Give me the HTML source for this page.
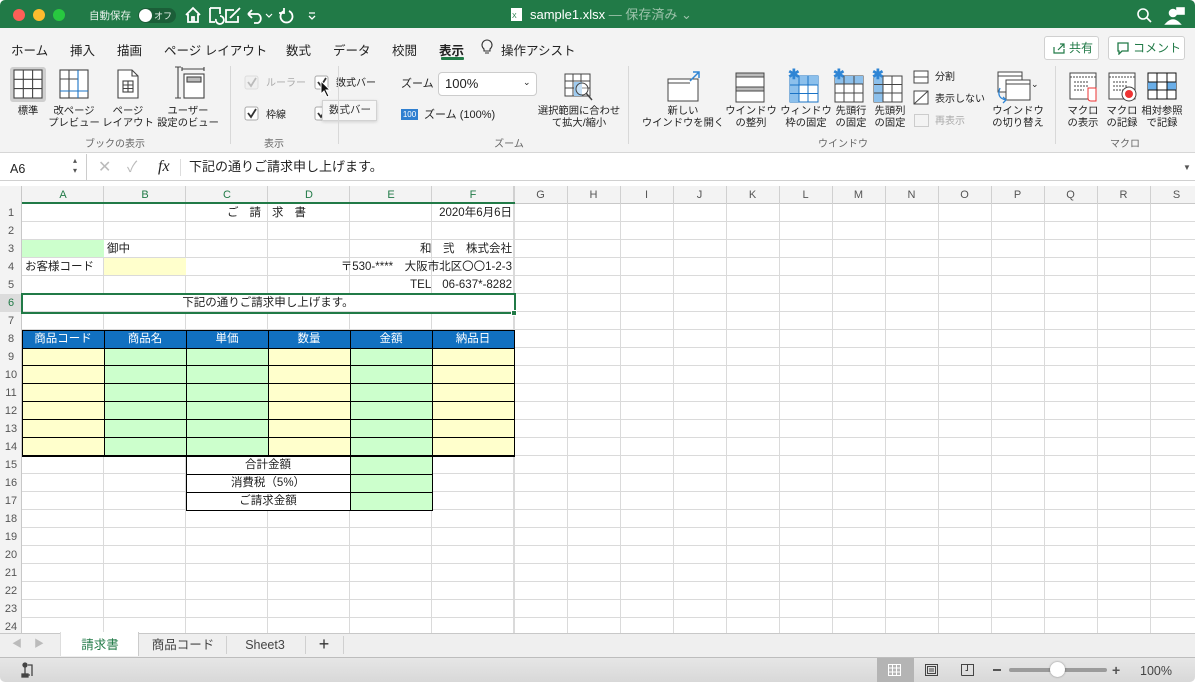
<!DOCTYPE html>
<html><head><meta charset="utf-8">
<style>
*{margin:0;padding:0;box-sizing:border-box}
body{width:1195px;height:682px;overflow:hidden;position:relative;background:#fff;font-family:"Liberation Sans","Noto Sans CJK JP",sans-serif;color:#222}
.a{position:absolute}
.t{position:absolute;white-space:nowrap;font-size:11px;line-height:12px;text-align:center}
.c{position:absolute;white-space:nowrap;font-size:10.3px;line-height:12px;text-align:center;transform:translateX(-50%)}
.title{left:0;top:0;width:1195px;height:28px;background:#217a47;border-radius:5px 5px 0 0}
.dot{position:absolute;top:9px;width:12px;height:12px;border-radius:50%}
.tabs span{position:absolute;top:40px;font-size:12.5px;color:#222}
.cell{position:absolute;height:18px;line-height:18px;font-size:11.5px;white-space:nowrap}
.rh{position:absolute;left:0;width:22px;text-align:center;font-size:11px;color:#555;height:18px;line-height:19px}
.ch{position:absolute;top:186px;height:18px;line-height:18px;text-align:center;font-size:11px;color:#555}
</style></head><body>
<div class="a title"></div>
<div class="dot" style="left:13px;background:#fe5f57"></div>
<div class="dot" style="left:33px;background:#febc2e"></div>
<div class="dot" style="left:53px;background:#28c840"></div>
<div class="t" style="left:89px;top:10px;color:#e8f1eb;font-size:10.5px">自動保存</div>
<div class="a" style="left:138px;top:8px;width:38px;height:15px;border-radius:8px;background:#1b5e38"></div>
<div class="a" style="left:139px;top:9px;width:13px;height:13px;border-radius:50%;background:#fff"></div>
<div class="t" style="left:154px;top:10px;color:#e8f1eb;font-size:9px">オフ</div>
<svg class="a" style="left:184px;top:5px" width="160" height="20" viewBox="0 0 160 20" fill="none" stroke="#fff" stroke-width="1.8">
<path d="M2 10 L9 3 L16 10 M4 9 V17 H14 V9 M8 17 V12 H10 V17"/>
<path d="M26 3 H36 V9 M26 3 V17 H31 M32 14 a4 4 0 1 0 4 -3"/>
<path d="M50 5 H42 V17 H54 V11 M46 13 L56 3"/>
<path d="M64 9 H74 a5 5 0 0 1 0 9 H70 M64 9 L68 5 M64 9 L68 13"/>
<path d="M82 9 l3 3 3 -3" stroke-width="1.2"/>
<path d="M100 6 a6 6 0 1 0 5 0 M100 3 V8 H95"/>
<path d="M125 8 H131 M125 11 l3 3 3 -3" stroke-width="1.3"/>
</svg>
<svg class="a" style="left:510px;top:7px" width="14" height="15"><rect x="1" y="1" width="11" height="13" fill="#fff"/><text x="2" y="11" font-size="7" fill="#217a47" font-family="Liberation Sans">X</text></svg>
<div class="t" style="left:530px;top:8px;font-size:13px;line-height:14px;color:#fff;text-align:left">sample1.xlsx <span style="color:#9dc3ab">— 保存済み ⌄</span></div>
<svg class="a" style="left:1136px;top:7px" width="50" height="18" fill="none" stroke="#fff" stroke-width="1.6"><circle cx="7" cy="7" r="5"/><path d="M11 11 L15 15"/><circle cx="37" cy="6" r="3.5" fill="#fff"/><path d="M30 17 q7 -8 14 0 Z" fill="#fff"/><rect x="41" y="1" width="7" height="6" fill="#fff"/></svg>

<div class="a" style="left:0;top:28px;width:1195px;height:125px;background:#f3f3f3;border-bottom:1px solid #d6d6d6"></div>
<div class="tabs">
<span style="left:11px">ホーム</span><span style="left:70px">挿入</span><span style="left:117px">描画</span><span style="left:164px">ページ レイアウト</span><span style="left:286px">数式</span><span style="left:333px">データ</span><span style="left:392px">校閲</span><span style="left:439px;font-weight:bold">表示</span><span style="left:501px">操作アシスト</span>
</div>
<div class="a" style="left:441px;top:57px;width:23px;height:3px;background:#217a47;border-radius:1px"></div>
<svg class="a" style="left:480px;top:38px" width="14" height="18" fill="none" stroke="#333" stroke-width="1.1"><path d="M4 11 a5 5 0 1 1 6 0 V13 H4 Z M5 15 H9"/></svg>
<div class="a" style="left:1044px;top:36px;width:55px;height:24px;background:#fff;border:1px solid #d0d0d0;border-radius:3px"></div>
<div class="t" style="left:1069px;top:42px;font-size:12px;color:#217a47">共有</div>
<svg class="a" style="left:1052px;top:41px" width="14" height="14" fill="none" stroke="#217a47" stroke-width="1.2"><path d="M2 6 V12 H12 V8 M6 9 L12 3 M8 3 H12 V7"/></svg>
<div class="a" style="left:1108px;top:36px;width:77px;height:24px;background:#fff;border:1px solid #d0d0d0;border-radius:3px"></div>
<svg class="a" style="left:1116px;top:41px" width="14" height="14" fill="none" stroke="#217a47" stroke-width="1.3"><path d="M2 2 H12 V10 H6 L3 13 V10 H2 Z"/></svg>
<div class="t" style="left:1133px;top:42px;font-size:12px;color:#217a47">コメント</div>

<div class="a" style="left:10px;top:67px;width:36px;height:35px;background:#cfcfcf;border-radius:3px"></div>
<svg class="a" style="left:0;top:64px" width="230" height="40" fill="none" stroke="#444" stroke-width="1.1">
<rect x="14" y="6" width="28" height="28" fill="#fff"/><path d="M23.3 6 V34 M32.6 6 V34 M14 15.3 H42 M14 24.6 H42"/>
<rect x="60" y="6" width="28" height="28" fill="#fff"/><path d="M69 6 V34 M60 15 H78" /><path d="M78 6 V34 M60 27 H88" stroke="#1a73c6"/>
<path d="M118 6 H132 L138 12 V34 H118 Z" fill="#fff"/><path d="M132 6 V12 H138"/><rect x="123" y="17" width="10" height="11"/><path d="M123 21 H133 M123 24.5 H133 M128 17 V28"/>
<path d="M178 3 V34 M175 3 H181 M175 34 H181 M182 5 H204 M182 3 V7 M204 3 V7"/><rect x="184" y="10" width="20" height="24" fill="#fff"/><rect x="187" y="13" width="14" height="5" fill="#bbb"/>
</svg>
<div class="c" style="left:28px;top:106px">標準</div>
<div class="c" style="left:74px;top:106px">改ページ<br>プレビュー</div>
<div class="c" style="left:128px;top:106px">ページ<br>レイアウト</div>
<div class="c" style="left:188px;top:106px">ユーザー<br>設定のビュー</div>
<div class="c" style="left:115px;top:139px;color:#666;font-size:10px">ブックの表示</div>
<div class="a" style="left:230px;top:66px;width:1px;height:78px;background:#d8d8d8"></div>

<svg class="a" style="left:240px;top:72px" width="90" height="52" fill="none" stroke-width="1.8">
<rect x="5" y="4" width="13" height="13" rx="2" fill="#f0f0f0" stroke="#ddd" stroke-width="1"/><path d="M8 10 l3 4 5 -8" stroke="#bbb"/>
<rect x="75" y="4" width="13" height="13" rx="2" fill="#fff" stroke="#aaa" stroke-width="1"/><path d="M78 10 l3 4 5 -8" stroke="#333"/>
<rect x="5" y="35" width="13" height="13" rx="2" fill="#fff" stroke="#aaa" stroke-width="1"/><path d="M8 41 l3 4 5 -8" stroke="#333"/>
<rect x="75" y="35" width="13" height="13" rx="2" fill="#fff" stroke="#aaa" stroke-width="1"/><path d="M78 41 l3 4 5 -8" stroke="#333"/>
</svg>
<svg class="a" style="left:320px;top:80px" width="12" height="18"><path d="M1 1 V14 L4 11 L7 17 L9 16 L6 10 H10 Z" fill="#111" stroke="#fff" stroke-width="1"/></svg>
<div class="t" style="left:266px;top:78px;color:#aaa;font-size:10px">ルーラー</div>
<div class="t" style="left:336px;top:78px;font-size:10px">数式バー</div>
<div class="t" style="left:266px;top:110px;font-size:10px">枠線</div>
<div class="a" style="left:322px;top:100px;width:55px;height:21px;background:#f6f6f6;border:1px solid #d2d2d2;box-shadow:0 1px 3px rgba(0,0,0,.15)"></div>
<div class="t" style="left:329px;top:104px;color:#333;font-size:10.5px">数式バー</div>
<div class="c" style="left:274px;top:139px;color:#666;font-size:10px">表示</div>
<div class="a" style="left:338px;top:66px;width:1px;height:78px;background:#d8d8d8"></div>

<div class="t" style="left:401px;top:78px">ズーム</div>
<div class="a" style="left:438px;top:72px;width:99px;height:24px;background:#fff;border:1px solid #ccc;border-radius:4px"></div>
<div class="t" style="left:445px;top:77px;font-size:13px;line-height:14px">100%</div>
<div class="t" style="left:523px;top:76px;font-size:9px">⌄</div>
<div class="a" style="left:401px;top:109px;width:17px;height:11px;background:#2f7fd0;color:#fff;font-size:8px;line-height:11px;text-align:center">100</div>
<div class="t" style="left:424px;top:109px">ズーム (100%)</div>
<svg class="a" style="left:562px;top:71px" width="36" height="32" fill="none" stroke="#444" stroke-width="1"><rect x="3" y="3" width="25" height="22" fill="#fff"/><path d="M3 10 H28 M3 17 H28 M11 3 V25 M19 3 V25"/><rect x="12" y="11" width="8" height="14" fill="#9ecbf0" stroke="none"/><circle cx="20" cy="18" r="6" fill="rgba(255,255,255,.4)"/><path d="M24 22 L30 29" stroke-width="1.5"/></svg>
<div class="c" style="left:579px;top:106px">選択範囲に合わせ<br>て拡大/縮小</div>
<div class="c" style="left:509px;top:139px;color:#666;font-size:10px">ズーム</div>
<div class="a" style="left:628px;top:66px;width:1px;height:78px;background:#d8d8d8"></div>

<svg class="a" style="left:660px;top:68px" width="400" height="40" fill="none" stroke="#444" stroke-width="1">
<rect x="8" y="11" width="30" height="22" fill="#fff"/><path d="M8 15 H30"/><path d="M30 13 L39 4 M33 4 H39 V10" stroke="#2f85d4" stroke-width="1.5"/>
<rect x="76" y="5" width="28" height="29" fill="#fff"/><rect x="76" y="5" width="28" height="4" fill="#bbb"/><rect x="76" y="19" width="28" height="4" fill="#bbb"/>
<rect x="130" y="8" width="28" height="26" fill="#fff" stroke="#1a73c6"/><rect x="130" y="8" width="28" height="9" fill="#8cc0ec" stroke="none"/><rect x="130" y="8" width="9" height="26" fill="#8cc0ec" stroke="none"/><path d="M139 8 V34 M148 8 V34 M130 17 H158 M130 25.5 H158" stroke="#1a73c6"/>
<rect x="175" y="8" width="28" height="26" fill="#fff"/><rect x="175" y="8" width="28" height="8" fill="#8cc0ec" stroke="none"/><path d="M184 8 V34 M194 8 V34 M175 16 H203 M175 25 H203"/>
<rect x="214" y="8" width="28" height="26" fill="#fff"/><rect x="214" y="8" width="9" height="26" fill="#8cc0ec" stroke="none"/><path d="M223 8 V34 M232 8 V34 M214 16.5 H242 M214 25 H242"/>
<rect x="254" y="3" width="14" height="12" fill="#fff"/><path d="M254 9 H268"/>
<rect x="254" y="23" width="14" height="13" fill="#fff"/><path d="M254 36 L268 23"/>
<rect x="338" y="4" width="24" height="20" fill="#fff"/><path d="M338 8 H362"/><rect x="346" y="12" width="24" height="20" fill="#fff"/><path d="M346 16 H370"/><path d="M340 20 q-4 10 6 12 M343 29 l3 3 -3 3" stroke="#2f85d4" stroke-width="1.3"/>
</svg>
<div class="t" style="left:788px;top:68px;color:#2f85d4;font-size:14px;font-weight:bold">✱</div>
<div class="t" style="left:833px;top:68px;color:#2f85d4;font-size:14px;font-weight:bold">✱</div>
<div class="t" style="left:872px;top:68px;color:#2f85d4;font-size:14px;font-weight:bold">✱</div>
<div class="c" style="left:683px;top:106px">新しい<br>ウインドウを開く</div>
<div class="c" style="left:751px;top:106px">ウインドウ<br>の整列</div>
<div class="c" style="left:806px;top:106px">ウィンドウ<br>枠の固定</div>
<div class="c" style="left:851px;top:106px">先頭行<br>の固定</div>
<div class="c" style="left:890px;top:106px">先頭列<br>の固定</div>
<div class="t" style="left:935px;top:72px;font-size:10px">分割</div>
<div class="t" style="left:935px;top:94px;font-size:10px">表示しない</div>
<div class="a" style="left:914px;top:114px;width:15px;height:13px;border:1px solid #ccc"></div>
<div class="t" style="left:935px;top:116px;font-size:10px;color:#aaa">再表示</div>
<div class="t" style="left:1031px;top:78px;font-size:9px">⌄</div>
<div class="c" style="left:1018px;top:106px">ウインドウ<br>の切り替え</div>
<div class="c" style="left:843px;top:139px;color:#666;font-size:10px">ウインドウ</div>
<div class="a" style="left:1055px;top:66px;width:1px;height:78px;background:#d8d8d8"></div>

<svg class="a" style="left:1066px;top:70px" width="120" height="36" fill="none" stroke="#444" stroke-width="1">
<rect x="4" y="3" width="26" height="26" fill="#fff"/><path d="M4 7 H30 M8 12 H22 M8 16 H22 M8 20 H18" stroke-dasharray="2 1"/><path d="M22 18 H30 V31 H25 q-3 0 -3 -3 Z" fill="#fff" stroke="#e33"/>
<rect x="43" y="3" width="26" height="26" fill="#fff"/><path d="M43 7 H69 M47 12 H61 M47 16 H61 M47 20 H57" stroke-dasharray="2 1"/><circle cx="63" cy="24" r="7" fill="#fff"/><circle cx="63" cy="24" r="4" fill="#e33" stroke="none"/>
<rect x="82" y="3" width="28" height="26" fill="#fff" stroke="#111"/><rect x="82" y="12" width="9" height="8" fill="#6aaee8" stroke="none"/><rect x="101" y="12" width="9" height="8" fill="#6aaee8" stroke="none"/><path d="M91 3 V29 M101 3 V29 M82 12 H110 M82 20 H110" stroke="#111"/>
</svg>
<div class="c" style="left:1083px;top:106px">マクロ<br>の表示</div>
<div class="c" style="left:1122px;top:106px">マクロ<br>の記録</div>
<div class="c" style="left:1162px;top:106px">相対参照<br>で記録</div>
<div class="c" style="left:1125px;top:139px;color:#666;font-size:10px">マクロ</div>

<div class="a" style="left:0;top:153px;width:1195px;height:28px;background:#fff;border-bottom:1px solid #d0d0d0"></div>
<div class="a" style="left:0;top:154px;width:87px;height:26px;border-right:1px solid #ccc"></div>
<div class="t" style="left:10px;top:162px;font-size:12.5px;line-height:14px">A6</div>
<div class="t" style="left:73px;top:156px;font-size:8px;line-height:10px;color:#555">▴<br>▾</div>
<div class="t" style="left:98px;top:159px;font-size:16px;line-height:18px;color:#bbb">✕</div>
<div class="t" style="left:127px;top:159px;font-size:15px;line-height:18px;color:#bbb">✓</div>
<div class="t" style="left:158px;top:158px;font-size:16px;line-height:18px;font-family:'Liberation Serif',serif;font-style:italic">fx</div>
<div class="a" style="left:180px;top:159px;width:1px;height:17px;background:#ddd"></div>
<div class="t" style="left:189px;top:159px;font-size:13px;line-height:16px">下記の通りご請求申し上げます。</div>
<div class="t" style="left:1183px;top:162px;font-size:8px;color:#555">▼</div>

<div class="a" style="left:0;top:181px;width:1195px;height:5px;background:#fff"></div>
<div class="a" style="left:0;top:186px;width:1195px;height:18px;background:#f3f3f3;border-bottom:1px solid #c8c8c8"></div>
<div class="a" style="left:0;top:186px;width:22px;height:448px;background:#f3f3f3;border-right:1px solid #c8c8c8"></div>
<div class="a" style="left:22px;top:204px;width:1173px;height:430px;
background:
repeating-linear-gradient(to bottom,transparent 0 17px,#dadada 17px 18px),
linear-gradient(to right,transparent 0 492px,#fff 492px),
repeating-linear-gradient(to right,transparent 0 81px,#dadada 81px 82px);"></div>
<div class="a" style="left:514px;top:204px;width:681px;height:430px;
background:repeating-linear-gradient(to bottom,transparent 0 17px,#dadada 17px 18px),repeating-linear-gradient(to right,#dadada 0 1px,transparent 1px 53px);"></div>
<div class="a" style="left:22px;top:186px;width:1173px;height:18px;background:repeating-linear-gradient(to right,transparent 0 81px,#d0d0d0 81px 82px) 0 0/492px 18px no-repeat,repeating-linear-gradient(to right,#d0d0d0 0 1px,transparent 1px 53px) 492px 0/681px 18px no-repeat"></div>
<div class="a" style="left:22px;top:202px;width:493px;height:2px;background:#217a47"></div>
<div class="a" style="left:0;top:294px;width:22px;height:18px;background:#dcdcdc"></div>
<div class="ch" style="left:22px;width:82px;color:#217a47">A</div><div class="ch" style="left:104px;width:82px;color:#217a47">B</div><div class="ch" style="left:186px;width:82px;color:#217a47">C</div><div class="ch" style="left:268px;width:82px;color:#217a47">D</div><div class="ch" style="left:350px;width:82px;color:#217a47">E</div><div class="ch" style="left:432px;width:82px;color:#217a47">F</div>
<div class="ch" style="left:514px;width:53px">G</div><div class="ch" style="left:567px;width:53px">H</div><div class="ch" style="left:620px;width:53px">I</div><div class="ch" style="left:673px;width:53px">J</div><div class="ch" style="left:726px;width:53px">K</div><div class="ch" style="left:779px;width:53px">L</div><div class="ch" style="left:832px;width:53px">M</div><div class="ch" style="left:885px;width:53px">N</div><div class="ch" style="left:938px;width:53px">O</div><div class="ch" style="left:991px;width:53px">P</div><div class="ch" style="left:1044px;width:53px">Q</div><div class="ch" style="left:1097px;width:53px">R</div><div class="ch" style="left:1150px;width:53px">S</div>
<div class="rh" style="top:204px">1</div><div class="rh" style="top:222px">2</div><div class="rh" style="top:240px">3</div><div class="rh" style="top:258px">4</div><div class="rh" style="top:276px">5</div><div class="rh" style="top:294px;color:#217a47">6</div><div class="rh" style="top:312px">7</div><div class="rh" style="top:330px">8</div><div class="rh" style="top:348px">9</div><div class="rh" style="top:366px">10</div><div class="rh" style="top:384px">11</div><div class="rh" style="top:402px">12</div><div class="rh" style="top:420px">13</div><div class="rh" style="top:438px">14</div><div class="rh" style="top:456px">15</div><div class="rh" style="top:474px">16</div><div class="rh" style="top:492px">17</div><div class="rh" style="top:510px">18</div><div class="rh" style="top:528px">19</div><div class="rh" style="top:546px">20</div><div class="rh" style="top:564px">21</div><div class="rh" style="top:582px">22</div><div class="rh" style="top:600px">23</div><div class="rh" style="top:618px">24</div>

<div class="a" style="left:22px;top:240px;width:82px;height:17px;background:#ccffcc"></div>
<div class="a" style="left:104px;top:258px;width:82px;height:17px;background:#ffffcc"></div>
<div class="a" style="left:22px;top:295px;width:492px;height:16px;background:#fff"></div>
<div class="a" style="left:22px;top:330px;width:493px;height:19px;background:#1170c0;border:1px solid #000"></div>
<div class="a" style="left:22px;top:348px;width:493px;height:109px;border:1px solid #000;
background:linear-gradient(to right,#ffffcc 0 82px,#ccffcc 82px 246px,#ffffcc 246px 328px,#ccffcc 328px 410px,#ffffcc 410px)"></div>
<div class="a" style="left:22px;top:348px;width:493px;height:109px;background:repeating-linear-gradient(to bottom,transparent 0 17px,#000 17px 18px)"></div>
<div class="a" style="left:104px;top:330px;width:1px;height:127px;background:#000"></div>
<div class="a" style="left:186px;top:330px;width:1px;height:127px;background:#000"></div>
<div class="a" style="left:268px;top:330px;width:1px;height:127px;background:#000"></div>
<div class="a" style="left:350px;top:330px;width:1px;height:127px;background:#000"></div>
<div class="a" style="left:432px;top:330px;width:1px;height:127px;background:#000"></div>
<div class="a" style="left:186px;top:456px;width:247px;height:55px;border:1px solid #000;background:linear-gradient(to right,#fff 0 164px,#ccffcc 164px)"></div>
<div class="a" style="left:186px;top:474px;width:247px;height:1px;background:#000"></div>
<div class="a" style="left:186px;top:492px;width:247px;height:1px;background:#000"></div>
<div class="a" style="left:350px;top:456px;width:1px;height:55px;background:#000"></div>

<div class="cell" style="left:190px;width:164px;top:204px;text-align:center;letter-spacing:11px">ご請求書</div>
<div class="cell" style="left:432px;width:80px;top:204px;text-align:right">2020年6月6日</div>
<div class="cell" style="left:107px;top:240px">御中</div>
<div class="cell" style="left:350px;width:162px;top:240px;text-align:right">和　弐　株式会社</div>
<div class="cell" style="left:25px;top:258px">お客様コード</div>
<div class="cell" style="left:268px;width:244px;top:258px;text-align:right">〒530-****　大阪市北区〇〇1-2-3</div>
<div class="cell" style="left:350px;width:162px;top:276px;text-align:right">TEL　06-637*-8282</div>
<div class="cell" style="left:22px;width:492px;top:294px;text-align:center">下記の通りご請求申し上げます。</div>
<div class="cell" style="left:22px;width:82px;top:330px;text-align:center;color:#fff">商品コード</div>
<div class="cell" style="left:104px;width:82px;top:330px;text-align:center;color:#fff">商品名</div>
<div class="cell" style="left:186px;width:82px;top:330px;text-align:center;color:#fff">単価</div>
<div class="cell" style="left:268px;width:82px;top:330px;text-align:center;color:#fff">数量</div>
<div class="cell" style="left:350px;width:82px;top:330px;text-align:center;color:#fff">金額</div>
<div class="cell" style="left:432px;width:82px;top:330px;text-align:center;color:#fff">納品日</div>
<div class="cell" style="left:186px;width:164px;top:456px;text-align:center">合計金額</div>
<div class="cell" style="left:186px;width:164px;top:474px;text-align:center">消費税（5%）</div>
<div class="cell" style="left:186px;width:164px;top:492px;text-align:center">ご請求金額</div>
<div class="a" style="left:21px;top:293px;width:495px;height:21px;border:2px solid #217a47"></div>
<div class="a" style="left:511px;top:310px;width:6px;height:6px;background:#217a47;border:1px solid #fff"></div>

<div class="a" style="left:0;top:633px;width:1195px;height:25px;background:#efefef;border-top:1px solid #c8c8c8;border-bottom:1px solid #bdbdbd"></div>
<div class="t" style="left:12px;top:639px;font-size:10px;color:#bbb">◀</div>
<div class="t" style="left:34px;top:639px;font-size:10px;color:#bbb">▶</div>
<div class="a" style="left:60px;top:632px;width:79px;height:24px;background:#fff;border-right:1px solid #ccc;border-left:1px solid #ddd"></div>
<div class="c" style="left:100px;top:638px;font-size:12.5px;line-height:14px;color:#217a47">請求書</div>
<div class="c" style="left:183px;top:638px;font-size:12.5px;line-height:14px;color:#444">商品コード</div>
<div class="a" style="left:226px;top:636px;width:1px;height:18px;background:#d0d0d0"></div>
<div class="c" style="left:265px;top:638px;font-size:12.5px;line-height:14px;color:#444">Sheet3</div>
<div class="a" style="left:305px;top:636px;width:1px;height:18px;background:#d0d0d0"></div>
<div class="c" style="left:324px;top:634px;font-size:18px;line-height:20px;color:#333">+</div>
<div class="a" style="left:343px;top:636px;width:1px;height:18px;background:#d0d0d0"></div>

<div class="a" style="left:0;top:658px;width:1195px;height:24px;background:linear-gradient(#e6e6e6,#d8d8d8);border-radius:0 0 5px 5px"></div>
<svg class="a" style="left:20px;top:662px" width="16" height="16" fill="none" stroke="#444" stroke-width="1.3"><circle cx="5" cy="3" r="2" fill="#444"/><path d="M5 5 V13 H10 M8 3 H12 V14" /><rect x="2" y="12" width="6" height="3" fill="#444"/></svg>
<div class="a" style="left:877px;top:658px;width:37px;height:24px;background:#b4b4b4"></div>
<svg class="a" style="left:886px;top:662px" width="100" height="16" fill="none" stroke="#fff" stroke-width="1"><rect x="2.5" y="2.5" width="12" height="11"/><path d="M6.5 2.5 V13.5 M10.5 2.5 V13.5 M2.5 6 H14.5 M2.5 10 H14.5"/></svg>
<svg class="a" style="left:922px;top:662px" width="60" height="16" fill="none" stroke="#444" stroke-width="1"><rect x="3.5" y="2.5" width="12" height="11"/><rect x="5.5" y="4.5" width="8" height="7"/><path d="M7 7 H12 M7 9 H12"/><path d="M39.5 13.5 V2.5 H51.5 V13.5 H39.5 M45.5 2.5 V8.5 H43.5"/></svg>
<div class="a" style="left:993px;top:669px;width:8px;height:2px;background:#555"></div>
<div class="a" style="left:1009px;top:668px;width:98px;height:4px;background:#9b9b9b;border-radius:2px"></div>
<div class="a" style="left:1050px;top:662px;width:15px;height:15px;border-radius:50%;background:#fff;box-shadow:0 0 2px rgba(0,0,0,.4)"></div>
<div class="t" style="left:1112px;top:662px;font-size:14px;line-height:16px;color:#555;font-weight:bold">+</div>
<div class="t" style="left:1140px;top:664px;font-size:12.5px;line-height:14px;color:#444">100%</div>
</body></html>
